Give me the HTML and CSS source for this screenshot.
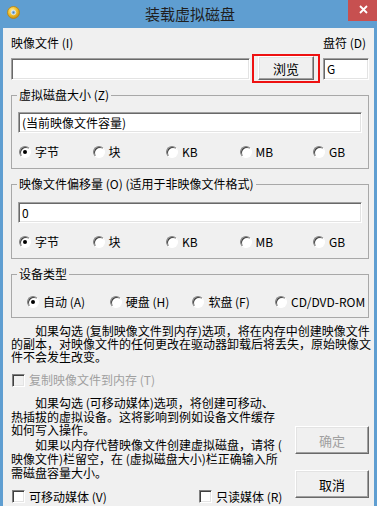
FILE: index.html
```html
<!DOCTYPE html>
<html lang="zh-CN">
<head>
<meta charset="utf-8">
<title>装载虚拟磁盘</title>
<link rel="stylesheet" href="styles.css">
</head>
<body>
<div class="window">
  <div class="titlebar">
    <svg class="appicon" width="13" height="13" viewBox="0 0 13 13">
      <defs>
        <radialGradient id="disc" cx="40%" cy="35%" r="70%">
          <stop offset="0" stop-color="#fff2a8"/>
          <stop offset="0.5" stop-color="#f2c230"/>
          <stop offset="1" stop-color="#c98a08"/>
        </radialGradient>
      </defs>
      <circle cx="6.5" cy="6.5" r="6" fill="url(#disc)" stroke="#b9820c" stroke-width="0.8"/>
      <circle cx="6.5" cy="6.5" r="2.3" fill="#9cc3e6" stroke="#e8e8e8" stroke-width="0.8"/>
      <circle cx="6.5" cy="6.5" r="0.9" fill="#4a7fb5"/>
    </svg>
    <div class="title">装载虚拟磁盘</div>
    <div class="close">
      <svg width="9" height="9" viewBox="0 0 9 9"><path d="M1 1 L8 8 M8 1 L1 8" stroke="#fff" stroke-width="1.8" fill="none"/></svg>
    </div>
  </div>
  <div class="client">
    <div class="labels">
      <span class="lbl-file">映像文件 (I)</span>
      <span class="lbl-drive">盘符 (D)</span>
    </div>
    <div class="inputs">
      <div class="edit file-edit"></div>
      <div class="highlight"><div class="btn browse">浏览</div></div>
      <div class="edit drive-edit">G</div>
    </div>

    <fieldset class="group g1">
      <legend>虚拟磁盘大小 (Z)</legend>
      <div class="edit wide">(当前映像文件容量)</div>
      <div class="radios five">
        <span class="radio"><span class="circle on"></span>字节</span>
        <span class="radio"><span class="circle"></span>块</span>
        <span class="radio"><span class="circle"></span>KB</span>
        <span class="radio"><span class="circle"></span>MB</span>
        <span class="radio"><span class="circle"></span>GB</span>
      </div>
    </fieldset>

    <fieldset class="group g2">
      <legend>映像文件偏移量 (O) (适用于非映像文件格式)</legend>
      <div class="edit wide">0</div>
      <div class="radios five">
        <span class="radio"><span class="circle on"></span>字节</span>
        <span class="radio"><span class="circle"></span>块</span>
        <span class="radio"><span class="circle"></span>KB</span>
        <span class="radio"><span class="circle"></span>MB</span>
        <span class="radio"><span class="circle"></span>GB</span>
      </div>
    </fieldset>

    <fieldset class="group g3">
      <legend>设备类型</legend>
      <div class="radios four">
        <span class="radio"><span class="circle on"></span>自动 (A)</span>
        <span class="radio"><span class="circle"></span>硬盘 (H)</span>
        <span class="radio"><span class="circle"></span>软盘 (F)</span>
        <span class="radio"><span class="circle"></span>CD/DVD-ROM</span>
      </div>
    </fieldset>

    <p class="para p1">如果勾选 (复制映像文件到内存)选项，将在内存中创建映像文件<br>的副本，对映像文件的任何更改在驱动器卸载后将丢失，原始映像文<br>件不会发生改变。</p>

    <div class="check disabled copy"><span class="box"></span>复制映像文件到内存 (T)</div>

    <div class="bottom">
      <div class="left">
        <p class="para p2">如果勾选 (可移动媒体)选项，将创建可移动、<br>热插拔的虚拟设备。这将影响到例如设备文件缓存<br>如何写入操作。</p>
        <p class="para p3">如果以内存代替映像文件创建虚拟磁盘，请将 (<br>映像文件)栏留空，在 (虚拟磁盘大小)栏正确输入所<br>需磁盘容量大小。</p>
        <div class="checks">
          <div class="check removable"><span class="box"></span>可移动媒体 (V)</div>
          <div class="check readonly"><span class="box"></span>只读媒体 (R)</div>
        </div>
      </div>
      <div class="right">
        <div class="btn action ok">确定</div>
        <div class="btn action cancel">取消</div>
      </div>
    </div>
  </div>
</div>
</body>
</html>
```

FILE: styles.css
```css
* { box-sizing: border-box; }
html, body { margin: 0; padding: 0; }
body {
  width: 377px;
  height: 506px;
  overflow: hidden;
  font-family: "Noto Sans CJK SC", "Noto Sans", sans-serif;
  font-size: 12px;
  color: #000;
}
.window {
  width: 377px;
  height: 506px;
  background: #5f9ed1;
  display: flex;
  flex-direction: column;
}
.titlebar {
  height: 28px;
  position: relative;
  display: flex;
  align-items: center;
  justify-content: center;
  flex: none;
}
.appicon {
  position: absolute;
  left: 7px;
  top: 6px;
}
.title {
  font-size: 15px;
  line-height: 20px;
  color: #1f1f1f;
  margin-left: 3px;
  margin-top: -1px;
}
.close {
  position: absolute;
  right: 0;
  top: 0;
  width: 29px;
  height: 21px;
  background: #c75050;
  display: flex;
  align-items: center;
  justify-content: center;
}
.close svg { margin-top: -3px; margin-left: 2px; }

.client {
  flex: 1;
  margin: 0 3px;
  background: #f0f0f0;
  padding: 8px 5px 0 8px;
}
.labels {
  display: flex;
  height: 14px;
  line-height: 14px;
}
.lbl-file { width: 312px; }

.inputs {
  display: flex;
  margin-top: 4px;
  height: 29px;
  align-items: flex-start;
}
.edit {
  background: #fff;
  border: 1px solid;
  border-color: #a0a0a0 #fff #fff #a0a0a0;
  box-shadow: inset 1px 1px 0 #696969, inset -1px -1px 0 #e3e3e3;
  padding-left: 3px;
  line-height: 19px;
  white-space: nowrap;
}
.file-edit { width: 239px; height: 22px; margin-top: 4px; }
.highlight {
  margin-left: 2px;
  border: 2px solid #ee1111;
  padding: 0 4px 1px;
}
.btn {
  background: #f0f0f0;
  border: 1px solid;
  border-color: #fff #696969 #696969 #fff;
  box-shadow: inset -1px -1px 0 #a0a0a0, inset 1px 1px 0 #e3e3e3;
  display: flex;
  align-items: center;
  justify-content: center;
}
.browse { width: 56px; height: 24px; font-size: 13px; }
.drive-edit { width: 46px; height: 22px; margin-top: 4px; margin-left: 3px; }

.group {
  margin: 0;
  border: 1px solid #a8a8a8;
  padding: 0 6px 9px;
  min-width: 0;
}
.group legend {
  padding: 0 2px;
  margin-left: -1px;
  line-height: 14px;
}
.g1 { margin-top: 5px; }
.g2 { margin-top: 8px; }
.g3 { margin-top: 8px; padding-bottom: 8px; }
.edit.wide { height: 21px; margin-top: 10px; }
.g2 .edit.wide { margin-top: 11px; }

.radios {
  display: grid;
  height: 14px;
  line-height: 14px;
  margin-top: 12px;
}
.radios.five {
  grid-template-columns: repeat(5, 73.5px);
  margin-left: 1px;
}
.radios.four {
  grid-template-columns: repeat(4, 82.7px);
  margin-left: 9px;
  margin-top: 14px;
}
.radio {
  display: flex;
  align-items: center;
  white-space: nowrap;
}
.circle {
  width: 12px;
  height: 12px;
  border-radius: 50%;
  border: 1px solid;
  border-color: #808080 #fff #fff #808080;
  box-shadow: inset 1px 1px 0 #404040;
  background: #fff;
  margin-right: 4px;
  display: flex;
  align-items: center;
  justify-content: center;
  flex: none;
}
.circle.on::after {
  content: "";
  width: 4px;
  height: 4px;
  border-radius: 50%;
  background: #000;
}

.para {
  margin: 0;
  line-height: 13px;
  white-space: nowrap;
  text-indent: 24px;
}
.p1 { margin-top: 6px; }

.check {
  display: flex;
  align-items: center;
  height: 14px;
  line-height: 14px;
  white-space: nowrap;
}
.check .box {
  width: 13px;
  height: 13px;
  background: #fff;
  border: 1px solid;
  border-color: #808080 #fff #fff #808080;
  box-shadow: inset 1px 1px 0 #404040, inset -1px -1px 0 #e3e3e3;
  margin-left: 1px;
  margin-right: 4px;
  flex: none;
}
.check.disabled { color: #a0a0a0; }
.check.disabled .box {
  background: #f0f0f0;
}
.copy { margin-top: 10px; }

.bottom {
  display: flex;
  margin-top: 9px;
}
.left { width: 286px; }
.p2 { line-height: 13.5px; }
.p3 { margin-top: 1px; line-height: 14px; }
.checks {
  display: flex;
  margin-top: 10px;
}
.removable { width: 187px; }
.right {
  display: flex;
  flex-direction: column;
  padding-top: 30px;
}
.action {
  width: 74px;
  height: 28px;
  font-size: 13px;
}
.ok { color: #a0a0a0; }
.cancel { margin-top: 16px; }
```
